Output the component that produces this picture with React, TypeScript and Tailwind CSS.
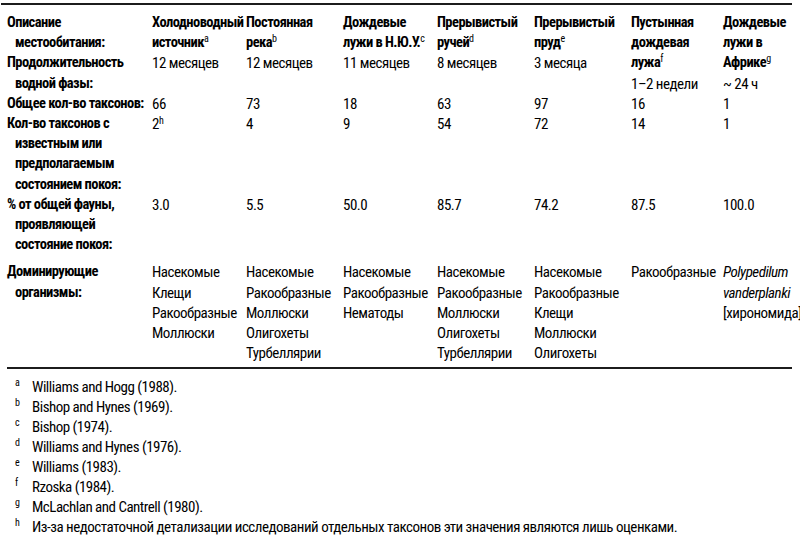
import React from "react";

type Line = { t: string; sup?: string; b?: boolean; i?: boolean; ind?: boolean };

const font = { fontFamily: '"Roboto Condensed", "DejaVu Sans Condensed", sans-serif' };

const headLabel: Line[] = [
  { t: "Описание", b: true },
  { t: "местообитания:", b: true, ind: true },
  { t: "Продолжительность", b: true },
  { t: "водной фазы:", b: true, ind: true },
];

const headCols: Line[][] = [
  [{ t: "Холодноводный", b: true }, { t: "источник", sup: "a", b: true }, { t: "12 месяцев" }],
  [{ t: "Постоянная", b: true }, { t: "река", sup: "b", b: true }, { t: "12 месяцев" }],
  [{ t: "Дождевые", b: true }, { t: "лужи в Н.Ю.У.", sup: "c", b: true }, { t: "11 месяцев" }],
  [{ t: "Прерывистый", b: true }, { t: "ручей", sup: "d", b: true }, { t: "8 месяцев" }],
  [{ t: "Прерывистый", b: true }, { t: "пруд", sup: "e", b: true }, { t: "3 месяца" }],
  [{ t: "Пустынная", b: true }, { t: "дождевая", b: true }, { t: "лужа", sup: "f", b: true }, { t: "1–2 недели" }],
  [{ t: "Дождевые", b: true }, { t: "лужи в", b: true }, { t: "Африке", sup: "g", b: true }, { t: "~ 24 ч" }],
];

const rows: { label: string[]; cells: Line[][]; extra?: boolean }[] = [
  {
    label: ["Общее кол-во таксонов:"],
    cells: ["66", "73", "18", "63", "97", "16", "1"].map((t) => [{ t }]),
  },
  {
    label: ["Кол-во таксонов с", "известным или", "предполагаемым", "состоянием покоя:"],
    cells: [[{ t: "2", sup: "h" }], ...["4", "9", "54", "72", "14", "1"].map((t) => [{ t }])],
  },
  {
    label: ["% от общей фауны,", "проявляющей", "состояние покоя:"],
    cells: ["3.0", "5.5", "50.0", "85.7", "74.2", "87.5", "100.0"].map((t) => [{ t }]),
  },
  {
    label: ["Доминирующие", "организмы:"],
    extra: true,
    cells: [
      ["Насекомые", "Клещи", "Ракообразные", "Моллюски"].map((t) => ({ t })),
      ["Насекомые", "Ракообразные", "Моллюски", "Олигохеты", "Турбеллярии"].map((t) => ({ t })),
      ["Насекомые", "Ракообразные", "Нематоды"].map((t) => ({ t })),
      ["Насекомые", "Ракообразные", "Моллюски", "Олигохеты", "Турбеллярии"].map((t) => ({ t })),
      ["Насекомые", "Ракообразные", "Клещи", "Моллюски", "Олигохеты"].map((t) => ({ t })),
      [{ t: "Ракообразные" }],
      [{ t: "Polypedilum", i: true }, { t: "vanderplanki", i: true }, { t: "[хирономида]" }],
    ],
  },
];

const notes: [string, string][] = [
  ["a", "Williams and Hogg (1988)."],
  ["b", "Bishop and Hynes (1969)."],
  ["c", "Bishop (1974)."],
  ["d", "Williams and Hynes (1976)."],
  ["e", "Williams (1983)."],
  ["f", "Rzoska (1984)."],
  ["g", "McLachlan and Cantrell (1980)."],
  ["h", "Из-за недостаточной детализации исследований отдельных таксонов эти значения являются лишь оценками."],
];

function Lines({ lines }: { lines: Line[] }) {
  return (
    <div className="flex flex-col">
      {lines.map((l, k) => (
        <span
          key={k}
          className={`whitespace-nowrap ${l.b ? "font-bold text-[14.5px] tracking-[-0.55px]" : "font-normal text-[15px] tracking-[-0.5px]"} ${l.i ? "italic" : ""} ${l.ind ? "pl-[8px]" : ""}`}
        >
          {l.t}
          {l.sup && <sup className="text-[10px] font-normal">{l.sup}</sup>}
        </span>
      ))}
    </div>
  );
}

export default function App() {
  return (
    <div className="w-[800px] h-[541px] overflow-hidden bg-white text-black text-[15px] leading-[20.2px]" style={font}>
      <div className="mt-[3px] ml-[1px] w-[791px] h-[2px] bg-[#1c1c1c]" />
      <div className="pt-[8px] pl-[7px] grid grid-cols-[145px_94px_97px_94px_97px_97px_92px_1fr]">
        <Lines lines={headLabel} />
        {headCols.map((c, k) => (
          <Lines key={k} lines={c} />
        ))}
        {rows.map((r, k) => (
          <React.Fragment key={k}>
            <div className={r.extra ? "pt-[7px]" : ""}>
              <Lines lines={r.label.map((t, j) => ({ t, b: true, ind: j > 0 }))} />
            </div>
            {r.cells.map((c, j) => (
              <div key={j} className={r.extra ? "pt-[7px]" : ""}>
                <Lines lines={c} />
              </div>
            ))}
          </React.Fragment>
        ))}
      </div>
      <div className="mt-[4px] ml-[7px] w-[785px] h-[2px] bg-[#1c1c1c]" />
      <div className="pt-[8px] leading-[20px]">
        {notes.map(([s, t]) => (
          <div key={s} className="flex pl-[15px] whitespace-nowrap tracking-[-0.5px]">
            <span className="w-[17px] text-[10px] relative top-[-4px]">{s}</span>
            <span>{t}</span>
          </div>
        ))}
      </div>
    </div>
  );
}
